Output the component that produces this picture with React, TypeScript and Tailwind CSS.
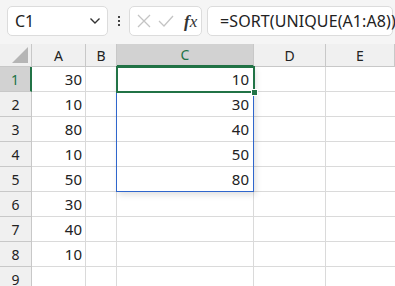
import React from "react";

const colA = ["30", "10", "80", "10", "50", "30", "40", "10", ""];
const colC = ["10", "30", "40", "50", "80", "", "", "", ""];

export default function App() {
  const font = { fontFamily: '"Noto Sans", "Open Sans", sans-serif' };
  return (
    <div className="w-[395px] h-[286px] overflow-hidden bg-white text-[#222]" style={font}>
      {/* toolbar */}
      <div className="h-[44px] bg-[#f5f5f5] flex items-start pt-[6px] pl-[7px] gap-0">
        <div className="w-[101px] h-[30px] bg-white border border-[#dcdcdc] rounded-[5px] flex items-center justify-between pl-[7px] pr-[6px]">
          <span className="text-[16px] text-[#222] leading-none">C1</span>
          <svg width="12" height="8" viewBox="0 0 12 8">
            <path d="M1.5 1.5 L6 6 L10.5 1.5" fill="none" stroke="#333" strokeWidth="1.4" />
          </svg>
        </div>
        <div className="w-[21px] h-[30px] flex flex-col items-center justify-center gap-[2px]">
          <span className="w-[2px] h-[2px] bg-[#444]" />
          <span className="w-[2px] h-[2px] bg-[#444]" />
          <span className="w-[2px] h-[2px] bg-[#444]" />
        </div>
        <div className="w-[73px] h-[30px] bg-white border border-[#dcdcdc] rounded-[5px] flex items-center pl-[7px] gap-[7px]">
          <svg width="14" height="14" viewBox="0 0 14 14">
            <path d="M1 1 L13 13 M13 1 L1 13" stroke="#c4c4c4" strokeWidth="1.3" />
          </svg>
          <svg width="16" height="14" viewBox="0 0 16 14">
            <path d="M1 7 L6 12 L15 2" fill="none" stroke="#c4c4c4" strokeWidth="1.3" />
          </svg>
          <span className="text-[17px] italic text-[#333] leading-none ml-[3px]" style={{ fontFamily: '"Liberation Serif", serif' }}>
            <span className="font-bold">f</span>x
          </span>
        </div>
        <div className="ml-[5px] w-[186px] h-[30px] bg-white border border-[#dcdcdc] rounded-[5px] flex items-center pl-[12px]">
          <span className="text-[16px] text-[#222] whitespace-nowrap leading-none tracking-[0.1px]">=SORT(UNIQUE(A1:A8))</span>
        </div>
      </div>

      {/* sheet */}
      <div className="relative">
        <div className="grid grid-cols-[32px_54px_31px_137px_72px_69px] grid-rows-[23px_repeat(9,25px)]">
          {/* header row */}
          <div className="relative bg-[#f0f0f0] border-r border-b border-[#c8c8c8]">
            <svg className="absolute right-[3px] bottom-[3px]" width="16" height="16" viewBox="0 0 16 16">
              <path d="M16 0 L16 16 L0 16 Z" fill="#b5b5b5" />
            </svg>
          </div>
          {["A", "B", "C", "D", "E"].map((c) => (
            <div
              key={c}
              className={
                c === "C"
                  ? "bg-[#d2d2d2] border-r border-[#c8c8c8] border-b-2 border-b-[#217346] flex items-center justify-center text-[14px] text-[#217346]"
                  : "bg-[#f0f0f0] border-r border-b border-[#c8c8c8] flex items-center justify-center text-[14px] text-[#222]"
              }
            >
              {c}
            </div>
          ))}
          {colA.map((a, i) => (
            <React.Fragment key={i}>
              <div
                className={
                  i === 0
                    ? "bg-[#d2d2d2] border-r-2 border-r-[#217346] border-b border-[#c8c8c8] flex items-center justify-center text-[14px] text-[#217346]"
                    : "bg-[#f0f0f0] border-r border-b border-[#c8c8c8] flex items-center justify-center text-[14px] text-[#222]"
                }
              >
                {i + 1}
              </div>
              <div className="border-r border-b border-[#dadada] flex items-center justify-end pr-[3px] text-[15px]">{a}</div>
              <div className="border-r border-b border-[#dadada]" />
              <div className="border-r border-b border-[#dadada] flex items-center justify-end pr-[4px] text-[15px]">{colC[i]}</div>
              <div className="border-r border-b border-[#dadada]" />
              <div className="border-b border-[#dadada]" />
            </React.Fragment>
          ))}
        </div>
        {/* spill range border */}
        <div className="absolute left-[116px] top-[22px] w-[138px] h-[126px] border border-[#2f66cc] shadow-[2px_3px_6px_rgba(0,0,0,0.12)] pointer-events-none" />
        {/* active cell */}
        <div className="absolute left-[116px] top-[22px] w-[139px] h-[27px] border-2 border-[#217346] pointer-events-none" />
        {/* fill handle */}
        <div className="absolute left-[251px] top-[45px] w-[7px] h-[7px] bg-[#217346] border border-white pointer-events-none" />
      </div>
    </div>
  );
}
